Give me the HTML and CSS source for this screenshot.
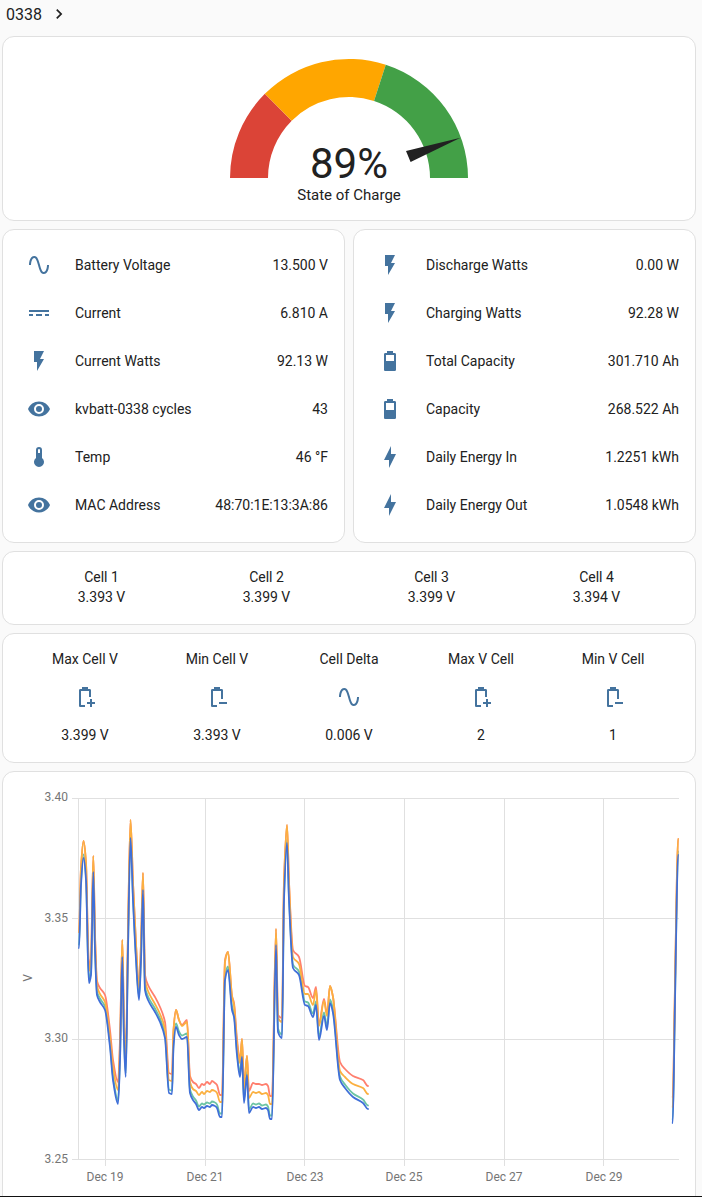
FILE: index.html
```html
<!DOCTYPE html>
<html lang="en">
<head>
    <meta charset="UTF-8">
    <meta name="viewport" content="width=device-width, initial-scale=1.0">
    <title>0338</title>
    <link rel="stylesheet" href="styles.css">
</head>
<body>

    <div class="breadcrumb">
        <span>0338</span>
        <svg class="crumb-icon" viewBox="0 0 24 24"><path d="M8.59,16.58L13.17,12L8.59,7.41L10,6L16,12L10,18L8.59,16.58Z"/></svg>
    </div>

    <div class="dashboard">

        <!-- Gauge -->
        <div class="card gauge-card">
            <svg class="gauge" viewBox="0 0 238 120">
                <path class="seg-red" d="M0,119 A119,119 0 0 1 34.85,34.85 L61.72,61.72 A81,81 0 0 0 38,119 Z"/>
                <path class="seg-orange" d="M34.85,34.85 A119,119 0 0 1 155.77,5.82 L144.03,41.96 A81,81 0 0 0 61.72,61.72 Z"/>
                <path class="seg-green" d="M155.77,5.82 A119,119 0 0 1 238,119 L200,119 A81,81 0 0 0 144.03,41.96 Z"/>
                <path class="needle" d="M176,92 L230.5,78.7 L180.6,103 Z"/>
                <text class="gauge-value" x="119" y="119" text-anchor="middle">89%</text>
            </svg>
            <div class="gauge-name">State of Charge</div>
        </div>

        <!-- Entity lists -->
        <div class="columns">
            <div class="card entities">
                <div class="row">
                    <svg class="icon" viewBox="0 0 24 24"><path d="M16.5,21C13.5,21 12.31,16.76 11.05,12.28C10.14,9.04 9,5 7.5,5C4.11,5 4,11.93 4,12H2C2,11.63 2.06,3 7.5,3C10.5,3 11.71,7.25 12.97,11.74C13.83,14.8 15,19 16.5,19C19.94,19 20.03,12.07 20.03,12H22.03C22.03,12.37 21.97,21 16.5,21Z"/></svg>
                    <span class="name">Battery Voltage</span>
                    <span class="value">13.500 V</span>
                </div>
                <div class="row">
                    <svg class="icon" viewBox="0 0 24 24"><path d="M2,9H22V11H2V9M2,13H6V15H2V13M9,13H15V15H9V13M18,13H22V15H18V13Z"/></svg>
                    <span class="name">Current</span>
                    <span class="value">6.810 A</span>
                </div>
                <div class="row">
                    <svg class="icon" viewBox="0 0 24 24"><path d="M7,2V13H10V22L17,10H13L17,2H7Z"/></svg>
                    <span class="name">Current Watts</span>
                    <span class="value">92.13 W</span>
                </div>
                <div class="row">
                    <svg class="icon" viewBox="0 0 24 24"><path d="M12,9A3,3 0 0,0 9,12A3,3 0 0,0 12,15A3,3 0 0,0 15,12A3,3 0 0,0 12,9M12,17A5,5 0 0,1 7,12A5,5 0 0,1 12,7A5,5 0 0,1 17,12A5,5 0 0,1 12,17M12,4.5C7,4.5 2.73,7.61 1,12C2.73,16.39 7,19.5 12,19.5C17,19.5 21.27,16.39 23,12C21.27,7.61 17,4.5 12,4.5Z"/></svg>
                    <span class="name">kvbatt-0338 cycles</span>
                    <span class="value">43</span>
                </div>
                <div class="row">
                    <svg class="icon" viewBox="0 0 24 24"><path d="M15 13V5A3 3 0 0 0 9 5V13A5 5 0 1 0 15 13M12 4A1 1 0 0 1 13 5V8H11V5A1 1 0 0 1 12 4Z"/></svg>
                    <span class="name">Temp</span>
                    <span class="value">46 °F</span>
                </div>
                <div class="row">
                    <svg class="icon" viewBox="0 0 24 24"><path d="M12,9A3,3 0 0,0 9,12A3,3 0 0,0 12,15A3,3 0 0,0 15,12A3,3 0 0,0 12,9M12,17A5,5 0 0,1 7,12A5,5 0 0,1 12,7A5,5 0 0,1 17,12A5,5 0 0,1 12,17M12,4.5C7,4.5 2.73,7.61 1,12C2.73,16.39 7,19.5 12,19.5C17,19.5 21.27,16.39 23,12C21.27,7.61 17,4.5 12,4.5Z"/></svg>
                    <span class="name">MAC Address</span>
                    <span class="value">48:70:1E:13:3A:86</span>
                </div>
            </div>

            <div class="card entities">
                <div class="row">
                    <svg class="icon" viewBox="0 0 24 24"><path d="M7,2V13H10V22L17,10H13L17,2H7Z"/></svg>
                    <span class="name">Discharge Watts</span>
                    <span class="value">0.00 W</span>
                </div>
                <div class="row">
                    <svg class="icon" viewBox="0 0 24 24"><path d="M7,2V13H10V22L17,10H13L17,2H7Z"/></svg>
                    <span class="name">Charging Watts</span>
                    <span class="value">92.28 W</span>
                </div>
                <div class="row">
                    <svg class="icon" viewBox="0 0 24 24"><path d="M16,12H8V6H16M16.67,4H15V2H9V4H7.33A1.33,1.33 0 0,0 6,5.33V20.67C6,21.4 6.6,22 7.33,22H16.67A1.33,1.33 0 0,0 18,20.67V5.33C18,4.6 17.4,4 16.67,4Z"/></svg>
                    <span class="name">Total Capacity</span>
                    <span class="value">301.710 Ah</span>
                </div>
                <div class="row">
                    <svg class="icon" viewBox="0 0 24 24"><path d="M16,13H8V6H16M16.67,4H15V2H9V4H7.33A1.33,1.33 0 0,0 6,5.33V20.67C6,21.4 6.6,22 7.33,22H16.67A1.33,1.33 0 0,0 18,20.67V5.33C18,4.6 17.4,4 16.67,4Z"/></svg>
                    <span class="name">Capacity</span>
                    <span class="value">268.522 Ah</span>
                </div>
                <div class="row">
                    <svg class="icon" viewBox="0 0 24 24"><path d="M11 15H6L13 1V9H18L11 23V15Z"/></svg>
                    <span class="name">Daily Energy In</span>
                    <span class="value">1.2251 kWh</span>
                </div>
                <div class="row">
                    <svg class="icon" viewBox="0 0 24 24"><path d="M11 15H6L13 1V9H18L11 23V15Z"/></svg>
                    <span class="name">Daily Energy Out</span>
                    <span class="value">1.0548 kWh</span>
                </div>
            </div>
        </div>

        <!-- Cell voltages -->
        <div class="card cells">
            <div class="cell"><div>Cell 1</div><div>3.393 V</div></div>
            <div class="cell"><div>Cell 2</div><div>3.399 V</div></div>
            <div class="cell"><div>Cell 3</div><div>3.399 V</div></div>
            <div class="cell"><div>Cell 4</div><div>3.394 V</div></div>
        </div>

        <!-- Cell stats -->
        <div class="card stats">
            <div class="stat">
                <div>Max Cell V</div>
                <svg class="icon" viewBox="0 0 24 24"><path d="M17 14H19V17H22V19H19V22H17V19H14V17H17V14M12 20H8V6H16V12H18V5.33C18 4.6 17.4 4 16.67 4H15V2H9V4H7.33C6.6 4 6 4.6 6 5.33V20.67C6 21.4 6.6 22 7.33 22H12V20Z"/></svg>
                <div>3.399 V</div>
            </div>
            <div class="stat">
                <div>Min Cell V</div>
                <svg class="icon" viewBox="0 0 24 24"><path d="M14 17H22V19H14V17M12 20H8V6H16V14H18V5.33C18 4.6 17.4 4 16.67 4H15V2H9V4H7.33C6.6 4 6 4.6 6 5.33V20.67C6 21.4 6.6 22 7.33 22H12V20Z"/></svg>
                <div>3.393 V</div>
            </div>
            <div class="stat">
                <div>Cell Delta</div>
                <svg class="icon" viewBox="0 0 24 24"><path d="M16.5,21C13.5,21 12.31,16.76 11.05,12.28C10.14,9.04 9,5 7.5,5C4.11,5 4,11.93 4,12H2C2,11.63 2.06,3 7.5,3C10.5,3 11.71,7.25 12.97,11.74C13.83,14.8 15,19 16.5,19C19.94,19 20.03,12.07 20.03,12H22.03C22.03,12.37 21.97,21 16.5,21Z"/></svg>
                <div>0.006 V</div>
            </div>
            <div class="stat">
                <div>Max V Cell</div>
                <svg class="icon" viewBox="0 0 24 24"><path d="M17 14H19V17H22V19H19V22H17V19H14V17H17V14M12 20H8V6H16V12H18V5.33C18 4.6 17.4 4 16.67 4H15V2H9V4H7.33C6.6 4 6 4.6 6 5.33V20.67C6 21.4 6.6 22 7.33 22H12V20Z"/></svg>
                <div>2</div>
            </div>
            <div class="stat">
                <div>Min V Cell</div>
                <svg class="icon" viewBox="0 0 24 24"><path d="M14 17H22V19H14V17M12 20H8V6H16V14H18V5.33C18 4.6 17.4 4 16.67 4H15V2H9V4H7.33C6.6 4 6 4.6 6 5.33V20.67C6 21.4 6.6 22 7.33 22H12V20Z"/></svg>
                <div>1</div>
            </div>
        </div>

        <!-- Chart, viewBox uses page coordinates -->
        <div class="card chart-card">
            <svg class="chart" viewBox="3 772 692 425">
                <g class="grid">
                    <path d="M72,798.5H679M72,918.5H679M72,1039.5H679M72,1159.5H679"/>
                    <path d="M78.5,798V1160M105.5,798V1166M205.5,798V1166M304.5,798V1166M404.5,798V1166M504.5,798V1166M603.5,798V1166"/>
                </g>
                <g class="y-labels">
                    <text x="68" y="801">3.40</text>
                    <text x="68" y="922">3.35</text>
                    <text x="68" y="1042">3.30</text>
                    <text x="68" y="1163">3.25</text>
                </g>
                <g class="x-labels">
                    <text x="105" y="1181">Dec 19</text>
                    <text x="205" y="1181">Dec 21</text>
                    <text x="305" y="1181">Dec 23</text>
                    <text x="404" y="1181">Dec 25</text>
                    <text x="504" y="1181">Dec 27</text>
                    <text x="604" y="1181">Dec 29</text>
                </g>
                <text class="y-title" transform="translate(32,978) rotate(-90)">V</text>
                <g id="lines"></g>
            </svg>
        </div>

    </div>

    <div class="bottom-edge"></div>

    <script src="chart.js"></script>
</body>
</html>
```

FILE: styles.css
```css
html, body {
    height: 100%;
}

body {
    font-family: Roboto, "Liberation Sans", sans-serif;
    font-size: 14px;
    color: #212121;
    background-color: #fafafa;
    margin: 0;
    overflow: hidden;
}

svg {
    display: block;
}

.breadcrumb {
    height: 28px;
    display: flex;
    align-items: center;
    gap: 7px;
    padding-left: 6px;
    font-size: 16px;
}

.crumb-icon {
    width: 20px;
    height: 20px;
    fill: #212121;
}

.dashboard {
    display: flex;
    flex-direction: column;
    gap: 8px;
    padding: 8px 6px 0 2px;
}

.card {
    background-color: white;
    border: 1px solid #e0e0e0;
    border-radius: 12px;
    box-sizing: border-box;
}

.gauge-card {
    height: 185px;
    padding-top: 22px;
    display: flex;
    flex-direction: column;
    align-items: center;
}

.gauge {
    width: 238px;
    height: 120px;
    overflow: visible;
}

.seg-red {
    fill: #db4437;
}

.seg-orange {
    fill: #ffa600;
}

.seg-green {
    fill: #43a047;
}

.needle {
    fill: #212121;
}

.gauge-value {
    font-size: 42px;
    fill: #212121;
}

.gauge-name {
    font-size: 15px;
    line-height: 20px;
    margin-top: 6px;
}

.columns {
    display: grid;
    grid-template-columns: 1fr 1fr;
    gap: 8px;
}

.entities {
    padding: 11px 16px 13px;
}

.row {
    height: 48px;
    display: flex;
    align-items: center;
}

.icon {
    width: 24px;
    height: 24px;
    fill: #44739e;
    flex-shrink: 0;
}

.row .icon {
    margin: 0 24px 0 8px;
}

.name {
    flex: 1;
}

.cells {
    display: grid;
    grid-template-columns: repeat(4, 1fr);
    padding: 15px 16px 17px;
    line-height: 20px;
    text-align: center;
}

.stats {
    display: grid;
    grid-template-columns: repeat(5, 1fr);
    padding: 15px 16px 17px;
    line-height: 20px;
    text-align: center;
}

.stat {
    display: flex;
    flex-direction: column;
    align-items: center;
    gap: 16px;
}

.chart-card {
    height: 440px;
}

.chart {
    width: 692px;
    height: 425px;
}

.grid path {
    fill: none;
    stroke: #e0e0e0;
    stroke-width: 1;
}

.y-labels text {
    font-size: 12px;
    fill: #757575;
    text-anchor: end;
}

.x-labels text {
    font-size: 12px;
    fill: #757575;
    text-anchor: middle;
}

.y-title {
    font-size: 12px;
    fill: #757575;
    text-anchor: middle;
}

#lines path {
    fill: none;
    stroke-width: 1.8;
    stroke-linejoin: round;
    stroke-linecap: round;
}

.bottom-edge {
    position: fixed;
    left: 0;
    right: 0;
    bottom: 0;
    height: 1px;
    background-color: #111;
}
```

FILE: chart.js
```js
// x, y of the lowest cell, then how far above it the red and the yellow cell sit
var history1 = [
    [79,948,16,16],[81,885,17,17],[83.5,858,17,17],[86,880,17,17],[88,960,17,14],[89,983,17,12],[91,975,17,14],
    [93.3,872,16,16],[95,950,16,14],[97,995,14,9],[100,1002,14,8],[105,1010,15,8],[110,1047,17,10],[113,1080,20,13],
    [118,1104,22,14],[120,1060,20,14],[122.3,957,17,17],[124,1040,16,16],[125.7,1077,17,15],[128,950,17,17],
    [130.5,838,18,18],[133,900,17,17],[136,960,16,16],[139,1000,14,12],[141,960,16,16],[143,890,17,17],
    [145,990,15,10],[148,1000,15,9],[155,1012,15,8],[160,1022,15,8],[165,1038,16,9],[169,1093,20,13],
    [172,1094,20,13],[173.5,1047,17,16],[176,1027,17,17],[179,1035,15,15],[182,1039,14,13],[187,1037,17,15],
    [190,1093,17,11],[193,1100,18,11],[196,1104,20,13],[199,1110,22,15],[202,1107,23,15],[204,1108,23,14],
    [207,1106,24,15],[210,1107,23,15],[212,1105,24,15],[215,1106,23,15],[217,1108,23,15],
    [220,1117,22,15],[222,1117,22,15],[225,980,20,18],[228,970,18,18],[232,1010,14,14],[234,1017,14,12],
    [237,1055,16,12],[240,1077,17,14],[242,1057,18,18],[244,1103,17,14],[247,1075,19,19],[249,1113,22,15],
    [253,1107,24,15],[256,1108,24,15],[259,1107,23,15],[262,1109,24,15],[266,1108,24,15],[268,1110,24,15],[270,1119,23,15],[272,1119,23,15],
    [276,945,16,16],[278,1032,17,14],[282,1038,20,16],[284,900,18,18],[287,843,18,18],[289,900,18,18],
    [293,968,18,11],[299,975,18,11],[305,1005,19,11],[308,1006,19,12],[313,1017,19,12],[316,1005,18,15],
    [319,1040,16,14],[324,1016,17,15],[327,1030,16,14],[330,1003,17,17],[333,1013,16,16],[340,1080,18,9],
    [345,1088,19,11],[353,1097,21,13],[363,1103,23,15],[368,1109,23,15]
];
var history2 = [
    [672.7,1123,26,16],[674.7,1020,18,16],[676.7,903,16,16],[678,855,16,16]
];

var series = [
    { color: '#6cc4a4', offset: function (p) { return 3.5; } },
    { color: '#ff7f6e', offset: function (p) { return p[2]; } },
    { color: '#fbb040', offset: function (p) { return p[3]; } },
    { color: '#3f6fd8', offset: function (p) { return 0; } }
];

// monotone curve through the points, so peaks don't overshoot
function smooth(points) {
    var slopes = points.map(function (p, i) {
        var prev = points[i - 1];
        var next = points[i + 1];
        if (!prev || !next) return 0;
        var a = (p[1] - prev[1]) / (p[0] - prev[0]);
        var b = (next[1] - p[1]) / (next[0] - p[0]);
        return a * b <= 0 ? 0 : 2 * a * b / (a + b);
    });
    var d = 'M' + points[0][0] + ',' + points[0][1];
    for (var i = 0; i < points.length - 1; i++) {
        var p1 = points[i];
        var p2 = points[i + 1];
        var h = (p2[0] - p1[0]) / 3;
        d += 'C' + (p1[0] + h).toFixed(1) + ',' + (p1[1] + slopes[i] * h).toFixed(1) +
            ' ' + (p2[0] - h).toFixed(1) + ',' + (p2[1] - slopes[i + 1] * h).toFixed(1) +
            ' ' + p2[0] + ',' + p2[1];
    }
    return d;
}

var group = document.getElementById('lines');

series.forEach(function (s) {
    [history1, history2].forEach(function (data) {
        var points = data.map(function (p) { return [p[0], p[1] - s.offset(p)]; });
        var path = document.createElementNS('http://www.w3.org/2000/svg', 'path');
        path.setAttribute('d', smooth(points));
        path.setAttribute('stroke', s.color);
        group.appendChild(path);
    });
});
```
